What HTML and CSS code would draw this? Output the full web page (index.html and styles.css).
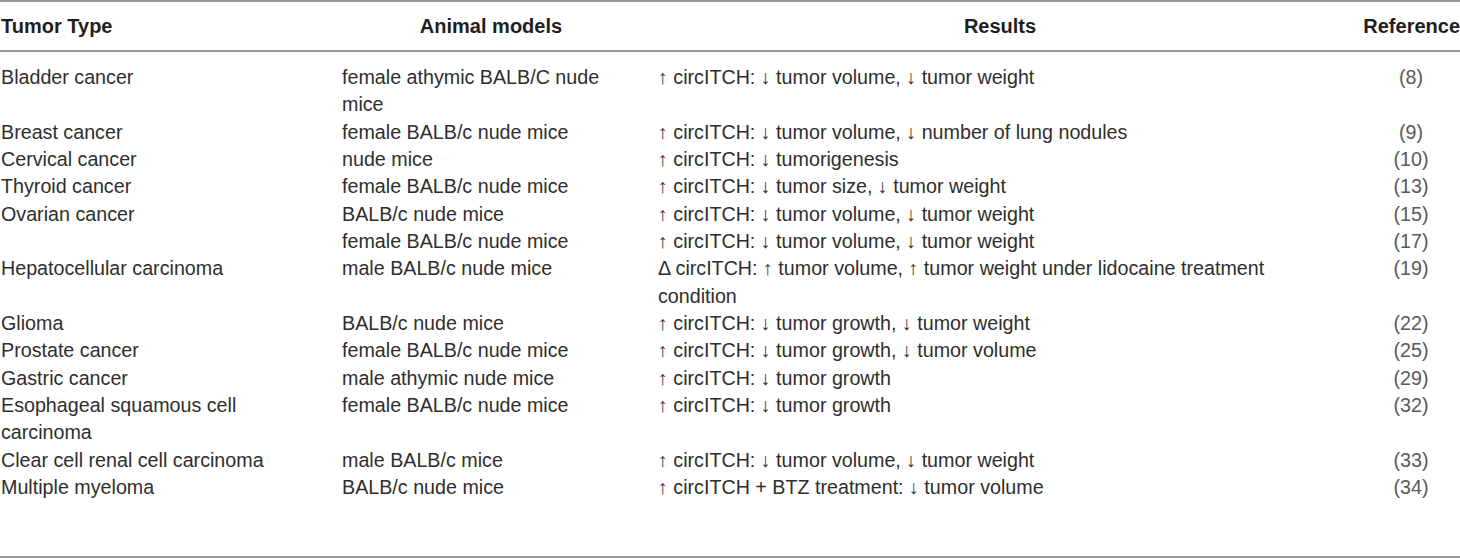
FILE: index.html
```html
<!DOCTYPE html>
<html>
<head>
<meta charset="utf-8">
<link rel="stylesheet" href="styles.css">
</head>
<body>
<table class="tbl">
  <colgroup>
    <col class="c-type">
    <col class="c-model">
    <col class="c-res">
    <col class="c-ref">
  </colgroup>
  <thead>
    <tr>
      <th class="left">Tumor Type</th>
      <th>Animal models</th>
      <th>Results</th>
      <th>Reference</th>
    </tr>
  </thead>
  <tbody>
    <tr class="first"><td>Bladder cancer</td><td>female athymic BALB/C nude mice</td><td>↑ circITCH: ↓ tumor volume, ↓ tumor weight</td><td class="ref">(8)</td></tr>
    <tr><td>Breast cancer</td><td>female BALB/c nude mice</td><td>↑ circITCH: ↓ tumor volume, ↓ number of lung nodules</td><td class="ref">(9)</td></tr>
    <tr><td>Cervical cancer</td><td>nude mice</td><td>↑ circITCH: ↓ tumorigenesis</td><td class="ref">(10)</td></tr>
    <tr><td>Thyroid cancer</td><td>female BALB/c nude mice</td><td>↑ circITCH: ↓ tumor size, ↓ tumor weight</td><td class="ref">(13)</td></tr>
    <tr><td>Ovarian cancer</td><td>BALB/c nude mice</td><td>↑ circITCH: ↓ tumor volume, ↓ tumor weight</td><td class="ref">(15)</td></tr>
    <tr><td></td><td>female BALB/c nude mice</td><td>↑ circITCH: ↓ tumor volume, ↓ tumor weight</td><td class="ref">(17)</td></tr>
    <tr><td>Hepatocellular carcinoma</td><td>male BALB/c nude mice</td><td>Δ circITCH: ↑ tumor volume, ↑ tumor weight under lidocaine treatment condition</td><td class="ref">(19)</td></tr>
    <tr><td>Glioma</td><td>BALB/c nude mice</td><td>↑ circITCH: ↓ tumor growth, ↓ tumor weight</td><td class="ref">(22)</td></tr>
    <tr><td>Prostate cancer</td><td>female BALB/c nude mice</td><td>↑ circITCH: ↓ tumor growth, ↓ tumor volume</td><td class="ref">(25)</td></tr>
    <tr><td>Gastric cancer</td><td>male athymic nude mice</td><td>↑ circITCH: ↓ tumor growth</td><td class="ref">(29)</td></tr>
    <tr><td>Esophageal squamous cell carcinoma</td><td>female BALB/c nude mice</td><td>↑ circITCH: ↓ tumor growth</td><td class="ref">(32)</td></tr>
    <tr><td>Clear cell renal cell carcinoma</td><td>male BALB/c mice</td><td>↑ circITCH: ↓ tumor volume, ↓ tumor weight</td><td class="ref">(33)</td></tr>
    <tr class="last"><td>Multiple myeloma</td><td>BALB/c nude mice</td><td>↑ circITCH + BTZ treatment: ↓ tumor volume</td><td class="ref">(34)</td></tr>
  </tbody>
</table>
</body>
</html>
```
FILE: styles.css
```css
html, body {
  margin: 0;
  padding: 0;
  background: #ffffff;
}
body {
  font-family: "Liberation Sans", "DejaVu Sans", Arial, sans-serif;
  color: #2e2e2e;
  width: 1460px;
}
.tbl {
  width: 1460px;
  border-collapse: collapse;
  table-layout: fixed;
  border-top: 2px solid #9a9a9a;
  border-bottom: 2px solid #9a9a9a;
}
.c-type { width: 342px; }
.c-model { width: 316px; }
.c-res { width: 702px; }
.c-ref { width: 100px; }

th {
  font-weight: bold;
  font-size: 20px;
  color: #1e1e1e;
  height: 48px;
  padding: 0 18px 0 0;
  text-align: center;
  vertical-align: middle;
  border-bottom: 2px solid #9a9a9a;
}
th.left {
  text-align: left;
  padding-left: 1px;
}
th:last-child {
  padding: 0;
  text-align: right;
}
td {
  font-size: 19.7px;
  line-height: 27.33px;
  padding: 0 18px 0 0;
  vertical-align: top;
  text-align: left;
}
td:first-child {
  padding-left: 1px;
  padding-right: 20px;
}
td.ref {
  padding: 0;
  text-align: center;
  color: #5a5a5a;
  padding-left: 2px;
}
tr.first td {
  padding-top: 12px;
}
tr.last td {
  padding-bottom: 55px;
}
```
